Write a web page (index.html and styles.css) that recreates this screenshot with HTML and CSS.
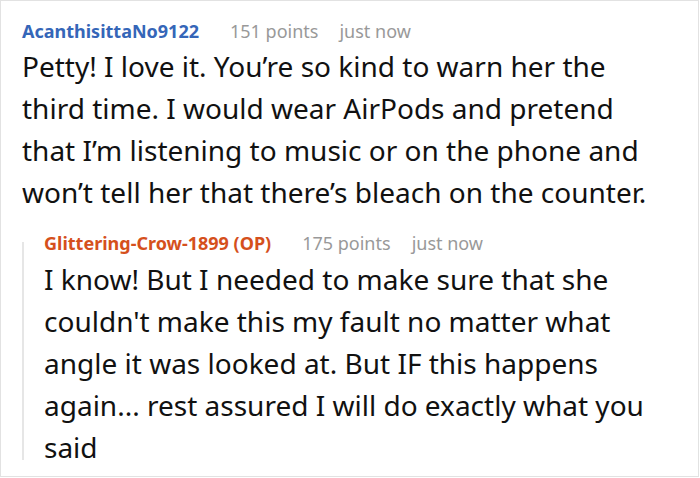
FILE: index.html
```html
<!DOCTYPE html>
<html>
<head>
<meta charset="utf-8">
<link rel="stylesheet" href="styles.css">
</head>
<body>
<div class="card">
  <div class="comment">
    <div class="meta">
      <span class="user">AcanthisittaNo9122</span>
      <span class="points">151 points</span>
      <span class="time">just now</span>
    </div>
    <p class="text">Petty! I love it. You’re so kind to warn her the third time. I would wear AirPods and pretend that I’m listening to music or on the phone and won’t tell her that there’s bleach on the counter.</p>
    <div class="reply">
      <div class="thread"></div>
      <div class="reply-body">
        <div class="meta">
          <span class="user op">Glittering-Crow-1899 (OP)</span>
          <span class="points">175 points</span>
          <span class="time">just now</span>
        </div>
        <p class="text">I know! But I needed to make sure that she couldn't make this my fault no matter what angle it was looked at. But IF this happens again... rest assured I will do exactly what you said</p>
      </div>
    </div>
  </div>
</div>
</body>
</html>
```

FILE: styles.css
```css
html, body {
  margin: 0;
  padding: 0;
  background: #fff;
}
body {
  font-family: "Noto Sans", "Open Sans", sans-serif;
  color: #111;
}
.card {
  box-sizing: border-box;
  width: 699px;
  height: 477px;
  border: 1px solid #e2e2e2;
  overflow: hidden;
}
.comment {
  padding: 19px 0 0 21px;
}
.meta {
  display: flex;
  align-items: baseline;
  font-size: 18px;
  line-height: 22px;
  height: 22px;
  white-space: nowrap;
}
.user {
  font-weight: 700;
  color: #3566b8;
}
.user.op {
  color: #d5501c;
}
.points {
  color: #999;
  margin-left: 31px;
}
.time {
  color: #999;
  margin-left: 21px;
}
.text {
  margin: 3px 0 0 0;
  width: 640px;
  font-size: 28px;
  line-height: 42px;
  color: #111;
}
.reply {
  display: flex;
  margin-top: 19px;
}
.thread {
  width: 2px;
  flex: none;
  background: #e6e6e6;
  margin: 10px 0 8px 0;
}
.reply-body {
  margin-left: 20px;
}
.reply-body .text {
  margin-top: 4px;
  width: 620px;
}
```
